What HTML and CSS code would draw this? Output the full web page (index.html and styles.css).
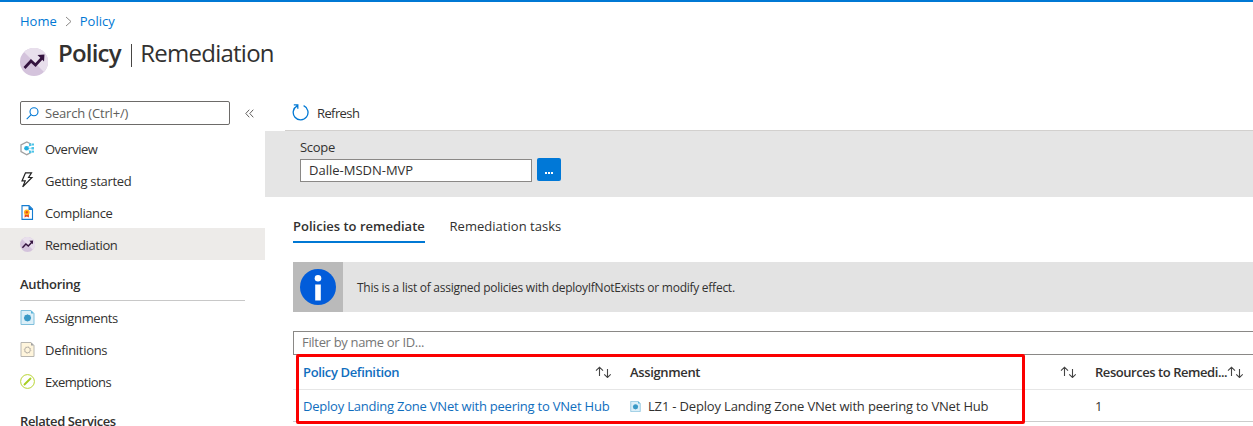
FILE: index.html
```html
<!DOCTYPE html>
<html lang="en">
<head>
<meta charset="utf-8">
<title>Policy | Remediation</title>
<link rel="stylesheet" href="styles.css">
</head>
<body>
<svg class="defs" width="0" height="0" aria-hidden="true">
  <symbol id="policy" viewBox="0 0 28 28">
    <circle cx="14" cy="14" r="14" fill="#d4c3dc"/>
    <path d="M4 4A14 14 0 0 1 24 24z" fill="#e8dfec"/>
    <path d="M4.500 20l6.500-7 4.500 4 7-7.500" fill="none" stroke="#34133f" stroke-width="2.700"/>
    <path d="M17.500 7l7-.5-.5 7z" fill="#34133f"/>
  </symbol>
  <symbol id="assignment" viewBox="0 0 14 15">
    <path d="M.5.5h10l3 3v11H.5z" fill="#dceff8" stroke="#7fbfdc"/>
    <path d="M10.500.5v3h3z" fill="#59b4d9"/>
    <path d="M7 4.300l1.300.6 1.500.4.4 1.400.5 1.200-.6 1.300-.4 1.300-1.400.4L7 11.500l-1.300-.6-1.400-.4-.4-1.300L3.300 7.900l.6-1.200.4-1.400 1.400-.4z" fill="#3999c6"/>
  </symbol>
  <symbol id="sort" viewBox="0 0 16 12">
    <path d="M4.500 10V1.200M1 4.700l3.500-3.500L8 4.700M12.500 3v8.500M9.200 8.300l3.300 3.200 3.300-3.200" fill="none" stroke="#444" stroke-width="1.100"/>
  </symbol>
</svg>
<header>
  <nav class="crumbs"><a>Home</a><svg width="7" height="11" viewBox="0 0 7 11"><path d="M1 1l5 4.500L1 10" fill="none" stroke="#8a8886"/></svg><a>Policy</a></nav>
  <div class="heading"><svg width="28" height="28"><use href="#policy"/></svg><h1><b>Policy</b><i></i><span>Remediation</span></h1></div>
</header>
<div class="layout">
  <aside>
    <div class="search-row">
      <div class="search"><svg width="13" height="13" viewBox="0 0 13 13"><g fill="none" stroke="#0078d4" stroke-width="1.100"><circle cx="8" cy="4.800" r="4"/><path d="M5.200 7.700L.7 12.200"/></g></svg><span>Search (Ctrl+/)</span></div>
      <svg class="collapse" width="9" height="9" viewBox="0 0 9 9"><path d="M4.300.7L.8 4.500l3.500 3.800M8.300.7L4.800 4.500l3.500 3.800" fill="none" stroke="#605e5c"/></svg>
    </div>
    <ul>
      <li><svg width="15" height="15" viewBox="0 0 15 15"><path d="M11 3L6.800.9 1 4v6.500l5.800 3.200L11 11.500" fill="none" stroke="#a0a1a2" stroke-width="1.300"/><path d="M6.500 7.300L11 3.700M6.500 7.300H12M6.500 7.300L11 11" stroke="#9be0f5"/><circle cx="6.500" cy="7.300" r="2.300" fill="#22aee0"/><g fill="#4cc4e8"><rect x="9" y="2.500" width="2.500" height="2.500"/><rect x="9" y="9.600" width="2.500" height="2.500"/><rect x="11.500" y="6" width="2.500" height="2.500"/><rect x="12" y="2.500" width="2" height="2"/><rect x="12" y="9.600" width="2" height="2"/></g></svg><span class="t-over">Overview</span></li>
      <li><svg width="15" height="16" viewBox="0 0 15 16"><path d="M5.500.8h6L8.600 5.500h3.300L2.700 14.900l2.500-6H2z" fill="none" stroke="#222" stroke-width="1.200"/></svg><span class="t-get">Getting started</span></li>
      <li><svg width="15" height="15" viewBox="0 0 15 15"><path d="M2 .6h7l3.500 3.500v10.300H2z" fill="#fff" stroke="#157cd0" stroke-width="1.100"/><path d="M8.500.5l4.500 4.500H8.500z" fill="#157cd0"/><path d="M4.800 8l-.3 4.500 2.300-1 2.200 1L8.800 8z" fill="#e84a1c"/><circle cx="6.800" cy="7.300" r="2.800" fill="#ffb51b"/><circle cx="6.800" cy="7.300" r="1.200" fill="#e84a1c"/></svg><span class="t-comp">Compliance</span></li>
      <li class="selected"><svg width="15" height="15"><use href="#policy"/></svg><span class="t-rem">Remediation</span></li>
    </ul>
    <h2 class="t-auth">Authoring</h2>
    <ul class="ruled">
      <li><svg width="15" height="15"><use href="#assignment"/></svg><span class="t-ass">Assignments</span></li>
      <li><svg width="15" height="15" viewBox="0 0 14 15"><path d="M.5.5h10l3 3v11H.5z" fill="#fff5dc" stroke="#b8b6b0"/><path d="M10.500.5v3h3z" fill="#a0a1a2"/><circle cx="7" cy="8" r="2.800" fill="none" stroke="#bab4aa"/><circle cx="7" cy="8" r="3.400" fill="none" stroke="#bab4aa" stroke-width=".8" stroke-dasharray="1 1.670"/></svg><span class="t-def">Definitions</span></li>
      <li><svg width="15" height="15" viewBox="0 0 15 15"><circle cx="7.500" cy="7.500" r="6.900" fill="#fff" stroke="#b8d432"/><path d="M4.500 10.500l6-6" stroke="#a8ce22" stroke-width="1.900" stroke-linecap="round"/></svg><span class="t-ex">Exemptions</span></li>
    </ul>
    <h2 class="t-rel">Related Services</h2>
  </aside>
  <main>
    <div class="toolbar"><svg width="17" height="17" viewBox="0 0 17 17"><path d="M11.600 1.700A7.400 7.400 0 1 1 5.200 1.900M1.800.8h4v4" fill="none" stroke="#0078d4" stroke-width="1.300"/></svg><span>Refresh</span></div>
    <section class="scope"><label>Scope</label><div><span class="input">Dalle-MSDN-MVP</span><button><i></i><i></i><i></i></button></div></section>
    <nav class="tabs"><a class="active"><span>Policies to remediate</span></a><a class="tab"><span>Remediation tasks</span></a></nav>
    <div class="info"><div class="info-icon"><svg width="36" height="36" viewBox="0 0 36 36"><circle cx="18" cy="18" r="18" fill="#015cda"/><circle cx="18" cy="9.300" r="3.300" fill="#fff"/><path d="M15.200 15.500h5.600v16h-5.600z" fill="#fff"/></svg></div><p>This is a list of assigned policies with deployIfNotExists or modify effect.</p></div>
    <div class="filter"><span>Filter by name or ID...</span></div>
    <div class="grid">
      <div class="row head"><div class="cell link"><span class="t-pd">Policy Definition</span><svg width="16" height="12"><use href="#sort"/></svg></div><div class="cell"><span class="t-as">Assignment</span><svg width="16" height="12"><use href="#sort"/></svg></div><div class="cell last"><span class="t-res">Resources to Remedi...</span><svg width="16" height="12"><use href="#sort"/></svg></div></div>
      <div class="row"><div class="cell link"><span class="t-dep">Deploy Landing Zone VNet with peering to VNet Hub</span></div><div class="cell file"><svg width="11" height="11"><use href="#assignment"/></svg><span class="t-lz">LZ1 - Deploy Landing Zone VNet with peering to VNet Hub</span></div><div class="cell"><span>1</span></div></div>
      <div class="highlight"></div>
    </div>
  </main>
</div>
</body>
</html>
```
FILE: styles.css
```css
* { box-sizing: border-box; }
body { margin: 0; height: 426px; overflow: hidden; background: #fff; color: #323130; border-top: 2px solid #0078d4; font: 13px/18px "Open Sans", "Noto Sans", sans-serif; letter-spacing: -0.3px; white-space: nowrap; }
svg { flex: none; display: block; }
.defs { display: none; }
header { height: 92px; padding: 10px 20px 0; }
.crumbs { display: flex; align-items: center; height: 18px; color: #0078d4; }
.crumbs a:first-child { letter-spacing: 0; }
.crumbs a:last-child { letter-spacing: 0; }
.crumbs svg { margin: 0 8px; }
.heading { display: flex; padding-top: 18px; gap: 10px; }
h1 { display: flex; align-items: center; margin: -11px 0 0; font-size: 24px; line-height: 32px; font-weight: 400; height: 32px; }
h1 b { font-weight: 600; letter-spacing: -0.8px; }
h1 i { width: 1.500px; height: 23px; margin: 4px 8px 0 10px; background: #484644; }
h1 span { letter-spacing: -0.75px; }
.layout { display: grid; grid-template-columns: 265px 1fr; }
aside { padding-top: 7px; }
.search-row { display: flex; align-items: center; padding-left: 20px; height: 24px; margin-bottom: 7px; }
.search { display: flex; align-items: center; width: 210px; height: 24px; padding-left: 5px; gap: 6px; border: 1px solid #6d6b69; border-radius: 2px; color: #605e5c; letter-spacing: -0.18px; }
.collapse { margin-left: 15px; }
ul { list-style: none; margin: 0; padding: 0; }
li { display: flex; align-items: center; height: 32px; padding-left: 20px; gap: 10px; }
li span { padding-top: 2px; }
.t-over { letter-spacing: -0.5px; }
.t-comp { letter-spacing: -0.38px; }
.t-rem { letter-spacing: -0.4px; }
.t-ass { letter-spacing: -0.38px; }
.t-ex { letter-spacing: -0.5px; }
.selected { background: #edebe9; }
h2 { margin: 15px 20px 0; height: 26px; border-bottom: 1px solid #c8c8c8; font-size: 13px; line-height: 18px; font-weight: 600; }
.t-rel { height: 18px; border: 0; margin-top: 15px; letter-spacing: -0.4px; }
.toolbar { display: flex; align-items: center; gap: 8px; height: 37px; margin-left: 20px; padding: 0 0 0 7px; border-bottom: 1px solid #d2d0ce; letter-spacing: -0.6px; }
.toolbar span { padding-top: 2px; }
.scope { height: 66px; padding: 7px 0 0 35px; background: #e5e5e5; }
.scope label { display: block; height: 20px; }
.scope div { display: flex; gap: 5px; }
.input { width: 232px; height: 23px; margin-top: 1px; padding: 1px 8px; background: #fff; border: 1px solid #8a8886; letter-spacing: 0; }
button { display: flex; gap: 1px; align-items: flex-end; justify-content: center; width: 24px; height: 23px; padding: 0 0 7px; border: 0; border-radius: 2px; background: #0078d7; }
button i { width: 2px; height: 2px; background: #fff; }
.tabs { display: flex; gap: 24.500px; padding: 20px 0 0 28px; height: 46px; }
.tabs a { height: 26px; }
.active { width: 132px; font-weight: 600; letter-spacing: 0; border-bottom: 2px solid #0078d4; }
.tab { letter-spacing: 0.03px; }
.info { display: flex; align-items: center; height: 50px; margin: 19px 0 0 28px; background: #e3e3e3; font-size: 12px; letter-spacing: -0.26px; }
.info-icon { display: grid; place-items: center; width: 50px; height: 50px; background: #bababa; }
.info p { margin: 2px 0 0 14px; }
.filter { height: 24px; margin: 19px -1px 0 28px; padding: 1px 8px; border: 1px solid #8a8886; color: #767676; letter-spacing: -0.32px; }
.grid { position: relative; margin-left: 28px; }
.row { display: grid; grid-template-columns: 327px 465px 168px; align-items: center; height: 32px; border-bottom: 1px solid #ccc; letter-spacing: -0.22px; }
.head { height: 35px; border-color: #e6e6e6; font-weight: 600; letter-spacing: -0.35px; }
.cell { display: flex; align-items: center; padding-left: 10px; }
.head .cell { justify-content: space-between; padding-right: 9px; }
.head .last { padding-right: 14px; }
.t-res { letter-spacing: -0.45px; }
.t-lz { letter-spacing: -0.17px; }
.file { gap: 7px; }
.file svg { margin-top: 2px; }
.link { color: #106ebe; }
.highlight { position: absolute; left: 3px; top: -1px; width: 729px; height: 70px; border: 3px solid #fb0000; border-radius: 2px; }
```
